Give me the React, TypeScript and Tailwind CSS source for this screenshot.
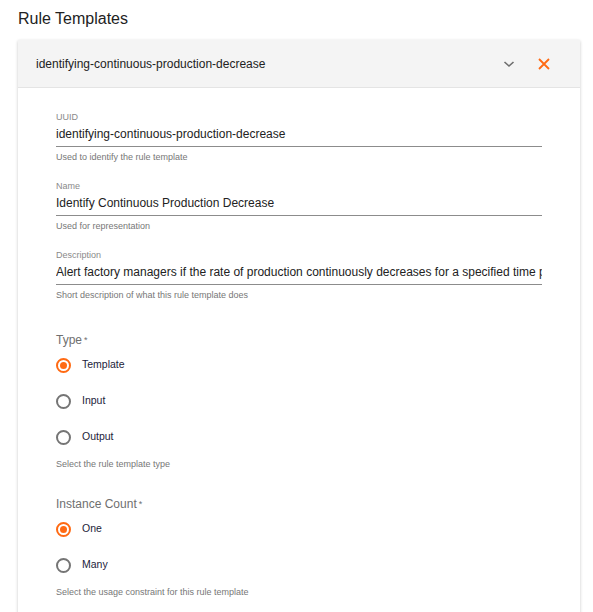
import React from 'react';

const font = { fontFamily: '"Liberation Sans", Arial, sans-serif' };

type FieldProps = { label: string; value: string; helper: string };

const TextField: React.FC<FieldProps> = ({ label, value, helper }) => (
  <div className="flex flex-col">
    <span className="text-[9px] leading-[10px] text-[#8a8a8a]">{label}</span>
    <div className="mt-[4px] h-[21px] border-b border-[#8c8c8c] overflow-hidden whitespace-nowrap text-[12px] leading-[16px] text-[#222]">
      {value}
    </div>
    <span className="mt-[5px] text-[9px] leading-[10px] text-[#777]">{helper}</span>
  </div>
);

const Radio: React.FC<{ label: string; checked?: boolean }> = ({ label, checked }) => (
  <div className="flex items-center h-[36px]">
    <span
      className={`w-[15px] h-[15px] rounded-full border-2 flex items-center justify-center ${
        checked ? 'border-[#ff6a13]' : 'border-[#757575]'
      }`}
    >
      {checked && <span className="w-[7px] h-[7px] rounded-full bg-[#ff6a13]" />}
    </span>
    <span className="ml-[11px] text-[10.5px] text-[#1c1c3a]">{label}</span>
  </div>
);

const RadioGroup: React.FC<{ title: string; options: string[]; helper: string }> = ({ title, options, helper }) => (
  <div className="flex flex-col">
    <span className="text-[12px] leading-[14px] text-[#6f6f6f]">
      {title}
      <span className="text-[9px] align-top ml-[2px]">*</span>
    </span>
    <div className="flex flex-col">
      {options.map((o, i) => (
        <Radio key={o} label={o} checked={i === 0} />
      ))}
    </div>
    <span className="mt-[4px] text-[9px] leading-[10px] text-[#777]">{helper}</span>
  </div>
);

export default function App() {
  return (
    <div className="w-[593px] h-[612px] bg-white overflow-hidden" style={font}>
      <h1 className="pl-[18px] pt-[9px] text-[16px] leading-[20px] text-[#222]">Rule Templates</h1>
      <div className="ml-[18px] mt-[11px] w-[562px] bg-white shadow-[0_1px_3px_rgba(0,0,0,0.22)]">
        <div className="h-[48px] bg-[#f4f4f4] border-b border-[#e4e4e4] flex items-center pl-[18px] pr-[30px]">
          <span className="text-[12px] text-[#222] mt-[1px]">identifying-continuous-production-decrease</span>
          <div className="ml-auto flex items-center gap-[23px]">
            <svg width="12" height="8" viewBox="0 0 12 8">
              <path d="M1.5 2 L6 6 L10.5 2" fill="none" stroke="#6e6e6e" strokeWidth="1.6" />
            </svg>
            <svg width="12" height="12" viewBox="0 0 12 12">
              <path d="M1 1 L11 11 M11 1 L1 11" fill="none" stroke="#ff6a13" strokeWidth="1.8" />
            </svg>
          </div>
        </div>
        <div className="pl-[38px] pr-[38px] pt-[24px] flex flex-col">
          <TextField
            label="UUID"
            value="identifying-continuous-production-decrease"
            helper="Used to identify the rule template"
          />
          <div className="mt-[19px]">
            <TextField label="Name" value="Identify Continuous Production Decrease" helper="Used for representation" />
          </div>
          <div className="mt-[19px]">
            <TextField
              label="Description"
              value="Alert factory managers if the rate of production continuously decreases for a specified time period"
              helper="Short description of what this rule template does"
            />
          </div>
          <div className="mt-[33px]">
            <RadioGroup
              title="Type"
              options={['Template', 'Input', 'Output']}
              helper="Select the rule template type"
            />
          </div>
          <div className="mt-[28px]">
            <RadioGroup
              title="Instance Count"
              options={['One', 'Many']}
              helper="Select the usage constraint for this rule template"
            />
          </div>
          <div className="h-[40px]" />
        </div>
      </div>
    </div>
  );
}
